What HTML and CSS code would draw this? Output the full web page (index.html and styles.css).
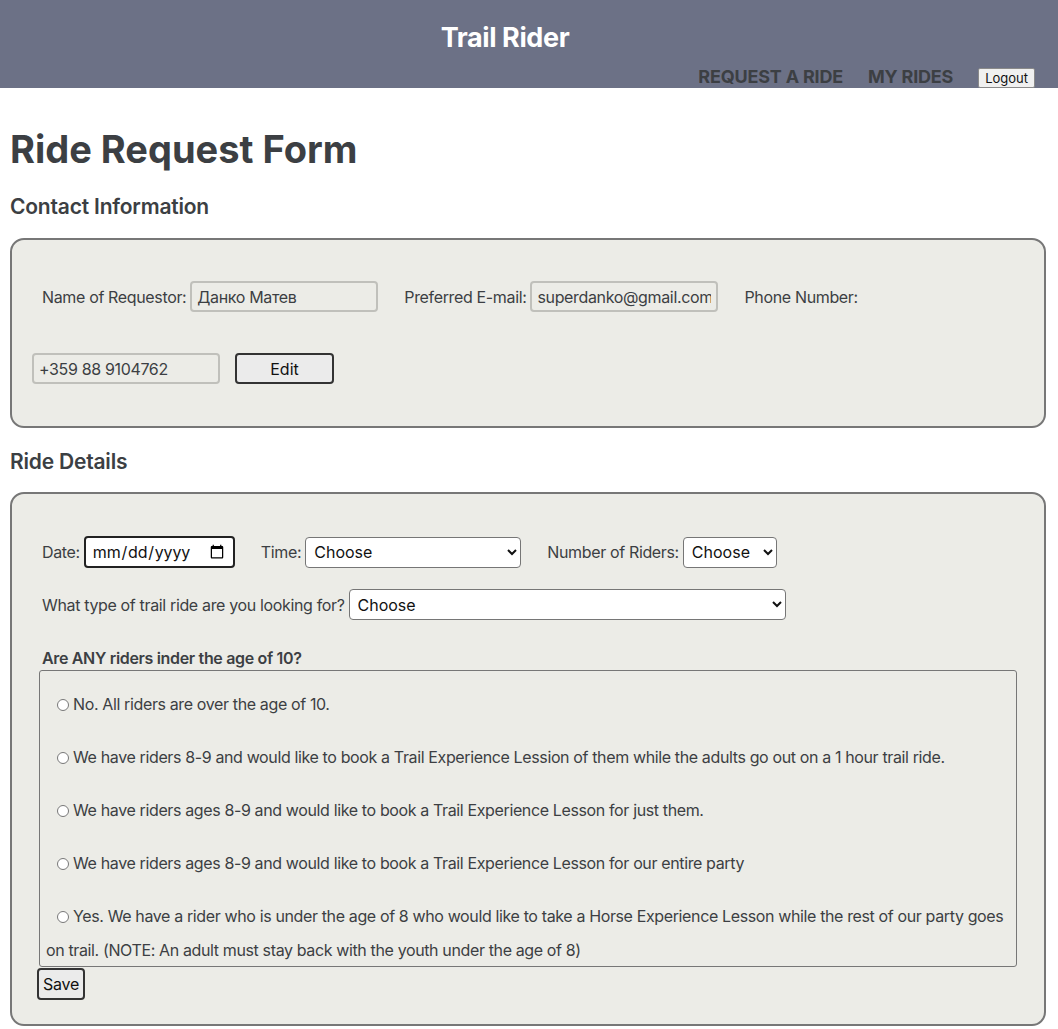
FILE: index.html
```html
<!DOCTYPE html>
<html>
<head>
<meta charset="utf-8">
<link rel="stylesheet" href="styles.css">
</head>
<body>
<header class="topbar">
  <div class="brand">Trail Rider</div>
  <nav class="nav">
    <a class="nav-link" href="#">REQUEST A RIDE</a>
    <a class="nav-link" href="#">MY RIDES</a>
    <button class="logout">Logout</button>
  </nav>
</header>
<main class="page">
  <h1 class="title">Ride Request Form</h1>
  <h3 class="section">Contact Information</h3>
  <div class="box contact">
    <label class="lbl">Name of Requestor:</label>
    <input class="ro" type="text" value="Данко Матев" disabled>
    <label class="lbl wide">Preferred E-mail:</label>
    <input class="ro" type="text" value="superdanko@gmail.com" disabled>
    <label class="lbl wide">Phone Number:</label>
    <input class="ro phone" type="text" value="+359 88 9104762" disabled>
    <button class="edit">Edit</button>
  </div>
  <h3 class="section">Ride Details</h3>
  <div class="box details">
    <div class="row">
      <label class="lbl">Date:</label>
      <input class="date" type="date">
      <label class="lbl wide">Time:</label>
      <select class="sel time"><option>Choose</option></select>
      <label class="lbl wide">Number of Riders:</label>
      <select class="sel riders"><option>Choose</option></select>
    </div>
    <div class="row row2">
      <label class="lbl">What type of trail ride are you looking for?</label>
      <select class="sel type"><option>Choose</option></select>
    </div>
    <div class="question">Are ANY riders inder the age of 10?</div>
    <div class="options">
      <div class="opt"><input type="radio" name="age">No. All riders are over the age of 10.</div>
      <div class="opt"><input type="radio" name="age">We have riders 8-9 and would like to book a Trail Experience Lession of them while the adults go out on a 1 hour trail ride.</div>
      <div class="opt"><input type="radio" name="age">We have riders ages 8-9 and would like to book a Trail Experience Lesson for just them.</div>
      <div class="opt"><input type="radio" name="age">We have riders ages 8-9 and would like to book a Trail Experience Lesson for our entire party</div>
      <div class="opt"><input type="radio" name="age">Yes. We have a rider who is under the age of 8 who would like to take a Horse Experience Lesson while the rest of our party goes on trail. (NOTE: An adult must stay back with the youth under the age of 8)</div>
    </div>
    <button class="save">Save</button>
  </div>
</main>
</body>
</html>
```
FILE: styles.css
```css
* { box-sizing: border-box; }
body {
  margin: 0;
  font-family: Inter, "Noto Sans", sans-serif;
  color: #3c3f43;
  background: #fff;
}
.topbar {
  background: #6c7186;
  height: 88px;
  padding-top: 22px;
}
.brand {
  color: #fff;
  font-weight: 700;
  font-size: 27px;
  letter-spacing: -0.4px;
  text-align: center;
  padding-right: 48px;
  line-height: 32px;
}
.nav {
  display: flex;
  justify-content: flex-end;
  align-items: center;
  gap: 25px;
  padding-right: 23px;
  margin-top: 10px;
}
.nav-link {
  color: #3c3f43;
  text-decoration: none;
  font-weight: 700;
  font-size: 18px;
  letter-spacing: -0.2px;
}
.logout {
  font-family: Inter, sans-serif;
  font-size: 13px;
  height: 20px;
  padding: 0 6px;
  background: #f0f0f0;
  border: 1px solid #8a8a8a;
  border-radius: 2px;
  color: #111;
  margin-top: 4px;
}
.page {
  padding: 0 12px 0 10px;
}
.title {
  font-size: 38px;
  font-weight: 700;
  margin: 38px 0 0;
  line-height: 46px;
}
.section {
  font-size: 21px;
  font-weight: 600;
  margin: 0;
  line-height: 26px;
  letter-spacing: -0.2px;
}
.title + .section { margin-top: 22px; }
.box {
  background: #ecece7;
  border: 2px solid #777;
  border-radius: 14px;
  padding: 41px 20px 42px 20px;
}
.contact {
  margin: 18px 0 21px;
  display: flex;
  flex-wrap: wrap;
  align-items: center;
  row-gap: 41px;
}
.lbl {
  font-size: 16px;
  letter-spacing: -0.35px;
  margin-left: 10px;
  margin-right: 4px;
}
.lbl.wide { margin-left: 26px; }
.ro {
  width: 188px;
  height: 31px;
  font-family: Inter, sans-serif;
  font-size: 16px;
  letter-spacing: -0.35px;
  color: #3c3f43;
  background: #ecece7;
  border: 2px solid #c0c0bb;
  border-radius: 4px;
  padding: 0 5px;
}
.edit {
  margin-left: 15px;
  width: 99px;
  height: 31px;
  font-family: Inter, sans-serif;
  font-size: 16px;
  background: #ebebeb;
  border: 2px solid #333;
  border-radius: 4px;
  color: #111;
}
.details {
  margin-top: 17px;
  padding-top: 42px;
  padding-bottom: 24px;
}
.row {
  display: flex;
  align-items: center;
}
.row2 { margin-top: 21px; }
.date {
  width: 151px;
  height: 32px;
  font-family: Inter, sans-serif;
  font-size: 16px;
  letter-spacing: -0.2px;
  border: 2px solid #222;
  border-radius: 4px;
  padding: 0 6px;
  background: #fff;
  color: #111;
}
.sel {
  height: 31px;
  font-family: Inter, sans-serif;
  font-size: 16px;
  color: #111;
  background: #fff;
  border: 1px solid #767676;
  border-radius: 4px;
  padding: 0 4px;
}
.time { width: 216px; }
.riders { width: 94px; }
.type { width: 437px; }
.question {
  margin: 28px 0 0 10px;
  font-size: 16px;
  font-weight: 600;
  letter-spacing: -0.33px;
  line-height: 20px;
}
.options {
  margin: 2px 7px 0 7px;
  border: 1px solid #777;
  border-radius: 3px;
  padding: 16px 0 0 6px;
  font-size: 16px;
  letter-spacing: -0.37px;
  height: 297px;
}
.opt {
  line-height: 34px;
  margin-bottom: 19px;
}
.opt input[type=radio] {
  margin: 0 4px 0 11px;
  width: 12px;
  height: 12px;
  vertical-align: -1px;
}
.save {
  margin-left: 5px;
  margin-top: 1px;
  height: 32px;
  width: 48px;
  padding: 0;
  font-family: Inter, sans-serif;
  font-size: 16px;
  letter-spacing: -0.2px;
  background: #ebebeb;
  border: 2px solid #333;
  border-radius: 4px;
  color: #111;
}
```
